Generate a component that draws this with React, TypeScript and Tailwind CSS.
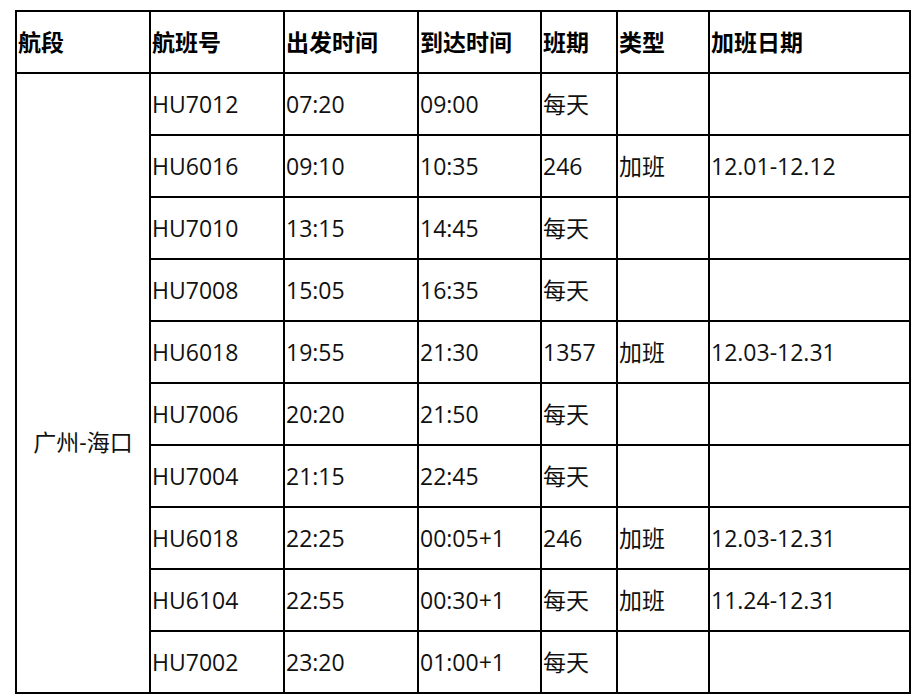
import React from "react";

type Row = {
  no: string;
  dep: string;
  arr: string;
  days: string;
  kind: string;
  dates: string;
};

const rows: Row[] = [
  { no: "HU7012", dep: "07:20", arr: "09:00", days: "每天", kind: "", dates: "" },
  { no: "HU6016", dep: "09:10", arr: "10:35", days: "246", kind: "加班", dates: "12.01-12.12" },
  { no: "HU7010", dep: "13:15", arr: "14:45", days: "每天", kind: "", dates: "" },
  { no: "HU7008", dep: "15:05", arr: "16:35", days: "每天", kind: "", dates: "" },
  { no: "HU6018", dep: "19:55", arr: "21:30", days: "1357", kind: "加班", dates: "12.03-12.31" },
  { no: "HU7006", dep: "20:20", arr: "21:50", days: "每天", kind: "", dates: "" },
  { no: "HU7004", dep: "21:15", arr: "22:45", days: "每天", kind: "", dates: "" },
  { no: "HU6018", dep: "22:25", arr: "00:05+1", days: "246", kind: "加班", dates: "12.03-12.31" },
  { no: "HU6104", dep: "22:55", arr: "00:30+1", days: "每天", kind: "加班", dates: "11.24-12.31" },
  { no: "HU7002", dep: "23:20", arr: "01:00+1", days: "每天", kind: "", dates: "" },
];

const headers = ["航段", "航班号", "出发时间", "到达时间", "班期", "类型", "加班日期"];
const widths = ["w-[134px]", "w-[134px]", "w-[134px]", "w-[123px]", "w-[76px]", "w-[92px]", "w-[201px]"];

const cell = "border-2 border-black px-[1px] align-middle";

export default function App() {
  return (
    <div className="min-h-screen bg-white pl-[15px] pt-[10px] text-[23px] leading-tight text-[#111] [font-family:'Open_Sans','Noto_Sans_CJK_SC',sans-serif]">
      <table className="table-fixed border-collapse w-[896px]">
        <colgroup>
          {widths.map((w, i) => (
            <col key={i} className={w} />
          ))}
        </colgroup>
        <thead>
          <tr className="h-[62px]">
            {headers.map((h) => (
              <th key={h} className={`${cell} text-left font-bold text-black`}>
                {h}
              </th>
            ))}
          </tr>
        </thead>
        <tbody>
          {rows.map((r, i) => (
            <tr key={i} className="h-[62px]">
              {i === 0 && (
                <td rowSpan={rows.length} className={`${cell} text-center pt-[118px]`}>
                  广州-海口
                </td>
              )}
              <td className={`${cell} text-left`}>{r.no}</td>
              <td className={`${cell} text-left`}>{r.dep}</td>
              <td className={`${cell} text-left`}>{r.arr}</td>
              <td className={`${cell} text-left`}>{r.days}</td>
              <td className={`${cell} text-left`}>{r.kind}</td>
              <td className={`${cell} text-left`}>{r.dates}</td>
            </tr>
          ))}
        </tbody>
      </table>
    </div>
  );
}
